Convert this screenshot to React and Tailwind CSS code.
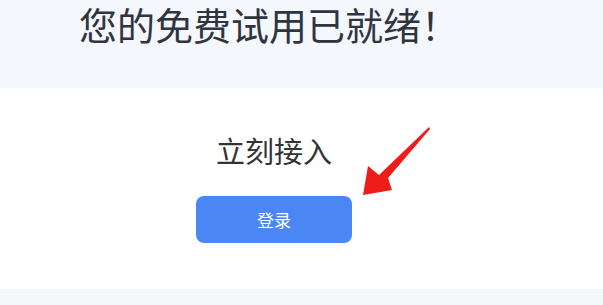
export default function App() {
  return (
    <div className="h-[305px] w-[603px] overflow-hidden bg-[#f4f7fc]" style={{ fontFamily: '"Noto Sans CJK SC", "Noto Sans", sans-serif' }}>
      <div className="h-[88px] pl-[79px] pt-[2px]">
        <h1 className="text-[38px] leading-[44px] font-normal text-[#2f3540]">您的免费试用已就绪！</h1>
      </div>

      <div className="relative h-[201px] bg-white pt-[42px]">
        <div className="ml-[196px] flex w-[156px] flex-col items-center">
          <p className="text-[29px] leading-[40px] text-[#333333]">立刻接入</p>
          <button className="mt-[26px] h-[47px] w-[156px] rounded-[8px] bg-[#4a87f5] text-[17px] text-white">
            登录
          </button>
        </div>

        <svg className="absolute left-[360px] top-[36px]" width="75" height="75" viewBox="0 0 75 75">
          <path d="M69 3 L70 5 L28 54 L32 66 L3 71 L8 42 L19 51 Z" fill="#f01c1c" />
        </svg>
      </div>
    </div>
  )
}
